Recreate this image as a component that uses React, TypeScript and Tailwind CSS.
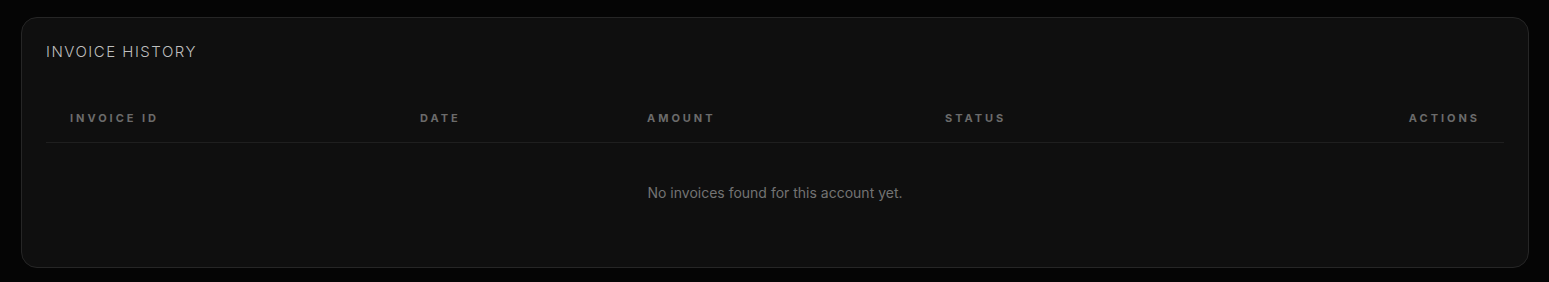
const columns = [
  { label: 'Invoice ID', width: 'w-[350px]', align: 'text-left' },
  { label: 'Date', width: 'w-[227px]', align: 'text-left' },
  { label: 'Amount', width: 'w-[298px]', align: 'text-left' },
  { label: 'Status', width: 'w-[300px]', align: 'text-left' },
  { label: 'Actions', width: '', align: 'text-right' },
];

export default function App() {
  return (
    <div className="min-h-screen bg-[#050505] pl-[21px] pr-[20px] pt-[17px] pb-[15px] font-['Inter',sans-serif]">
      <div className="rounded-2xl border border-[#262626] bg-[#0f0f0f] p-6">
        <h2 className="text-[15px] leading-5 font-light uppercase tracking-[0.1em] text-[#bfbfbf]">Invoice History</h2>

        <table className="mt-8 w-full table-fixed border-collapse">
          <thead>
            <tr className="border-b border-[#1f1f1f]">
              {columns.map((col) => (
                <th
                  key={col.label}
                  className={`${col.width} ${col.align} px-6 pt-4 pb-[15px] text-[11px] font-bold uppercase tracking-[0.27em] text-[#6b6b6b]`}
                >
                  {col.label}
                </th>
              ))}
            </tr>
          </thead>
          <tbody>
            <tr>
              <td colSpan={5} className="py-10 text-center text-sm text-[#737373]">
                No invoices found for this account yet.
              </td>
            </tr>
          </tbody>
        </table>
      </div>
    </div>
  );
}
